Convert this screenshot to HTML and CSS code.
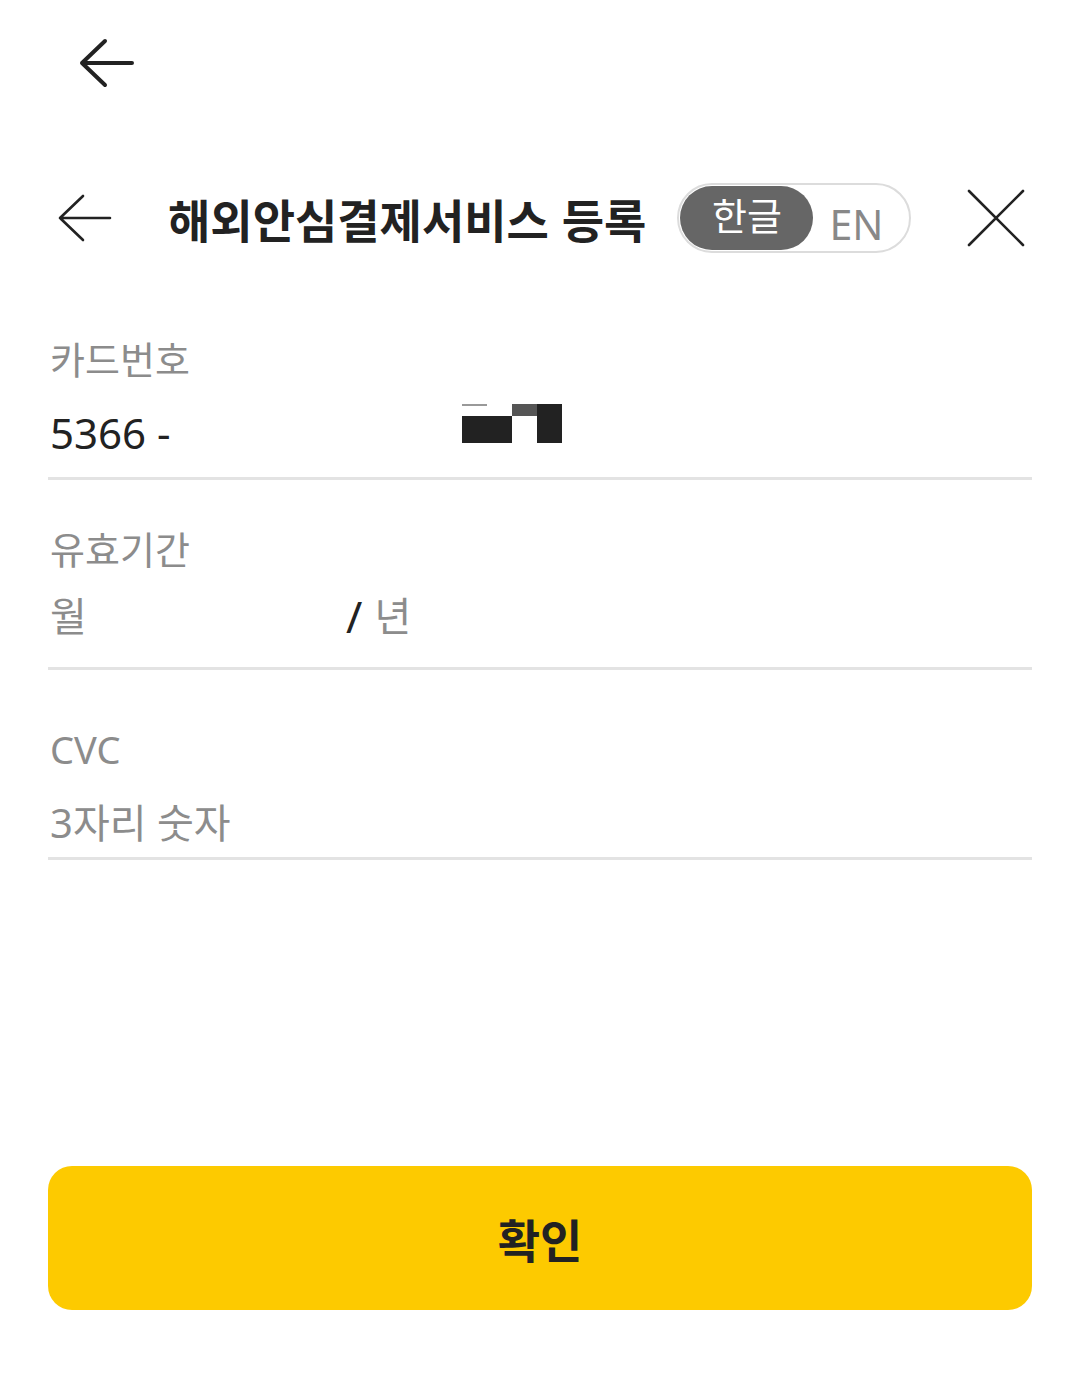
FILE: index.html
```html
<!DOCTYPE html>
<html lang="ko">
<head>
   <meta charset="utf-8">
   <meta content="width=device-width, initial-scale=1.0" name="viewport">
   <title>해외안심결제서비스 등록</title>
   <link rel="stylesheet" href="styles.css">
</head>
<body>
   <div id="page">
      <div class="topbar">
         <svg class="top-back" width="58" height="50" viewBox="0 0 58 50">
            <path d="M4 25 H54 M27 3 L4 25 L27 47" fill="none" stroke="#222" stroke-width="4" stroke-linecap="round" stroke-linejoin="round"/>
         </svg>
      </div>

      <div class="header">
         <svg class="back" width="54" height="48" viewBox="0 0 54 48">
            <path d="M2 24 H52 M25 2 L2 24 L25 46" fill="none" stroke="#222" stroke-width="2.6" stroke-linecap="round" stroke-linejoin="round"/>
         </svg>
         <h1 class="title">해외안심결제서비스 등록</h1>
         <div class="lang">
            <span class="lang-on">한글</span>
            <span class="lang-off">EN</span>
         </div>
         <svg class="close" width="58" height="58" viewBox="0 0 58 58">
            <path d="M2 2 L56 56 M56 2 L2 56" fill="none" stroke="#222" stroke-width="2.6" stroke-linecap="round"/>
         </svg>
      </div>

      <form class="fields">
         <div class="field">
            <div class="label">카드번호</div>
            <div class="value">
               <span class="num">5366 -</span>
               <span class="mask">
                  <i class="c-line"></i><i></i><i class="c-mid"></i><i class="c-dark"></i>
                  <i class="c-dark"></i><i class="c-dark"></i><i></i><i class="c-dark"></i>
               </span>
            </div>
         </div>
         <div class="field expiry">
            <div class="label">유효기간</div>
            <div class="value">
               <span class="ph month">월</span>
               <span class="slash">/</span>
               <span class="ph">년</span>
            </div>
         </div>
         <div class="field cvc">
            <div class="label">CVC</div>
            <div class="value">
               <span class="ph">3자리 숫자</span>
            </div>
         </div>
      </form>

      <div class="spacer"></div>

      <button type="button" class="confirm">확인</button>
   </div>
</body>
</html>
```

FILE: styles.css
```css
* {
    margin: 0;
    padding: 0;
    box-sizing: border-box;
}
body {
    background: #fff;
    font-family: "Noto Sans", "Noto Sans CJK KR", sans-serif;
    color: #222;
}
#page {
    height: 100vh;
    display: flex;
    flex-direction: column;
}
.topbar {
    height: 125px;
    display: flex;
    align-items: center;
    padding-left: 78px;
}
.header {
    margin-top: 58px;
    height: 70px;
    display: flex;
    align-items: center;
    padding: 0 55px 0 58px;
}
.title {
    margin-left: 56px;
    font-family: "Noto Sans CJK KR", sans-serif;
    font-size: 46px;
    font-weight: 700;
    color: #222;
    white-space: nowrap;
}
.lang {
    margin-left: 31px;
    width: 234px;
    height: 70px;
    border: 2px solid #dcdcdc;
    border-radius: 35px;
    padding: 1px;
    display: flex;
    align-items: center;
}
.lang-on {
    width: 133px;
    height: 64px;
    border-radius: 32px;
    background: #666;
    color: #fff;
    font-family: "Noto Sans CJK KR", sans-serif;
    font-size: 38px;
    line-height: 56px;
    text-align: center;
}
.lang-off {
    margin-left: 16px;
    margin-top: 12px;
    color: #888;
    font-size: 41px;
}
.close {
    margin-left: auto;
}
.fields {
    margin-top: 81px;
    padding: 0 48px;
}
.field {
    border-bottom: 3px solid #e3e3e3;
    padding: 0 2px 14px;
    margin-bottom: 44px;
}
.label {
    height: 50px;
    line-height: 50px;
    font-size: 38px;
    color: #8c8c8c;
}
.value {
    margin-top: 19px;
    height: 60px;
    line-height: 60px;
    font-size: 40px;
    display: flex;
    align-items: center;
}
.expiry .value {
    margin-top: 12px;
    margin-bottom: 7px;
}
.cvc {
    padding-top: 10px;
    padding-bottom: 4px;
}
.num {
    font-size: 42px;
    color: #222;
}
.mask {
    margin-left: 291px;
    margin-top: -20px;
    display: grid;
    grid-template-columns: repeat(4, 25px);
    grid-template-rows: 12px 27px;
}
.mask .c-line {
    border-top: 2px solid #999;
}
.mask .c-mid {
    background: #555;
}
.mask .c-dark {
    background: #222;
}
.ph {
    color: #8c8c8c;
}
.month {
    width: 296px;
}
.slash {
    color: #222;
    font-size: 44px;
    margin-right: 12px;
}
.spacer {
    flex: 1;
}
.confirm {
    margin: 0 48px 69px;
    height: 144px;
    border: 0;
    border-radius: 24px;
    background: #fdca00;
    color: #222;
    font-family: "Noto Sans CJK KR", sans-serif;
    font-size: 46px;
    font-weight: 700;
}
```
